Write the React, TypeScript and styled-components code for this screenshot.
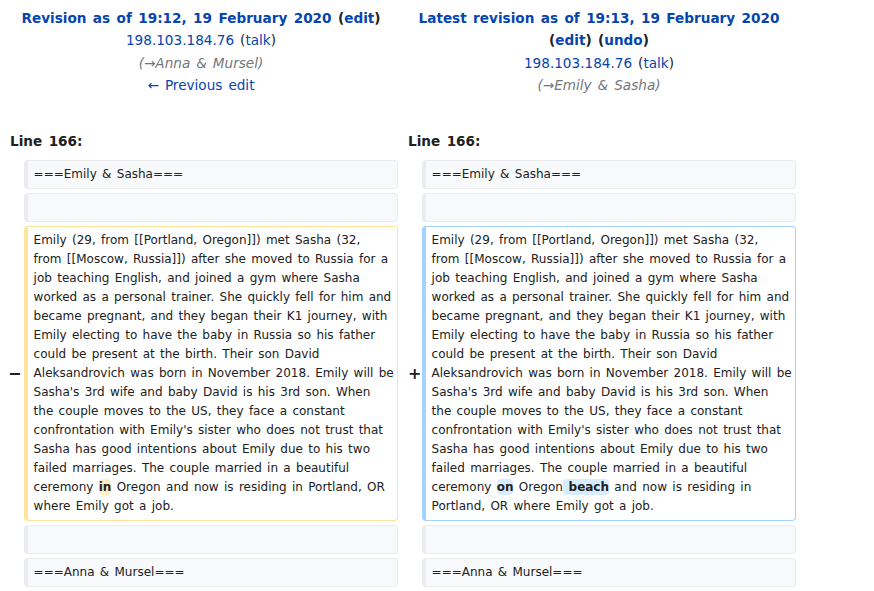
import React from "react";
import styled, { createGlobalStyle } from "styled-components";

type Kind = "context" | "deleted" | "added";

const GlobalStyle = createGlobalStyle`
  body {
    margin: 0;
    background: #fff;
    color: #202122;
    font-family: "DejaVu Sans", sans-serif;
    font-size: 13.6px;
    word-spacing: 1.7px;
  }
`;

const DiffTable = styled.table`
  width: 800px;
  table-layout: fixed;
  border-collapse: separate;
  border-spacing: 4px;
`;

const MarkerCol = styled.col`
  width: 2%;
`;

const ContentCol = styled.col`
  width: 48%;
`;

const HeaderCell = styled.td`
  text-align: center;
  vertical-align: top;
  line-height: 22.4px;
  padding: 3px 0 25px;
`;

const Title = styled.div`
  font-weight: bold;
`;

const Link = styled.a`
  color: #0645ad;
  text-decoration: none;
`;

const Summary = styled.div`
  color: #72777d;
  font-style: italic;
`;

const LineNo = styled.td`
  font-weight: bold;
  line-height: 22px;
  padding: 4px 6px 4px;
`;

const Marker = styled.td<{ $shift?: number }>`
  font-size: 16px;
  font-weight: bold;
  text-align: left;
  vertical-align: middle;
  padding: 0 0 0 ${(p) => p.$shift ?? 4}px;
  color: #202122;
  overflow: visible;
  white-space: nowrap;
`;

const borderColors: Record<Kind, string> = {
  context: "#eaecf0",
  deleted: "#ffe49c",
  added: "#a3d3ff",
};

const Cell = styled.td<{ $kind: Kind }>`
  font-size: 12px;
  line-height: 19px;
  word-spacing: 1.5px;
  vertical-align: top;
  white-space: pre-wrap;
  word-wrap: break-word;
  padding: 4px 2px 4px 6px;
  border-style: solid;
  border-width: 1px 1px 1px 4px;
  border-radius: 0.33em;
  border-color: ${(p) => borderColors[p.$kind]};
  background: ${(p) => (p.$kind === "context" ? "#f8f9fa" : "#fff")};
  color: #202122;
`;

const Change = styled.span<{ $kind: "deleted" | "added" }>`
  font-weight: bold;
  padding: 1px 0;
  border-radius: 0.33em;
  background: ${(p) => (p.$kind === "deleted" ? "#feeec8" : "#d8ecff")};
`;

const sharedLines = [
  "Emily (29, from [[Portland, Oregon]]) met Sasha (32,",
  "from [[Moscow, Russia]]) after she moved to Russia for a",
  "job teaching English, and joined a gym where Sasha",
  "worked as a personal trainer. She quickly fell for him and",
  "became pregnant, and they began their K1 journey, with",
  "Emily electing to have the baby in Russia so his father",
  "could be present at the birth. Their son David",
  "Aleksandrovich was born in November 2018. Emily will be",
  "Sasha's 3rd wife and baby David is his 3rd son. When",
  "the couple moves to the US, they face a constant",
  "confrontation with Emily's sister who does not trust that",
  "Sasha has good intentions about Emily due to his two",
  "failed marriages. The couple married in a beautiful",
];

const bodyStart = sharedLines.join("\n") + "\nceremony ";

function ContextRow({ text }: { text: string }) {
  return (
    <tr>
      <Marker />
      <Cell $kind="context">{text}</Cell>
      <Marker />
      <Cell $kind="context">{text}</Cell>
    </tr>
  );
}

export default function App() {
  return (
    <>
      <GlobalStyle />
      <DiffTable>
        <colgroup>
          <MarkerCol />
          <ContentCol />
          <MarkerCol />
          <ContentCol />
        </colgroup>
        <tbody>
          <tr>
            <HeaderCell colSpan={2}>
              <Title>
                <Link href="#">Revision as of 19:12, 19 February 2020</Link> (
                <Link href="#">edit</Link>)
              </Title>
              <div>
                <Link href="#">198.103.184.76</Link> (<Link href="#">talk</Link>)
              </div>
              <Summary>(→Anna &amp; Mursel)</Summary>
              <div>
                <Link href="#">← Previous edit</Link>
              </div>
            </HeaderCell>
            <HeaderCell colSpan={2}>
              <Title>
                <Link href="#">Latest revision as of 19:13, 19 February 2020</Link> (
                <Link href="#">edit</Link>) (<Link href="#">undo</Link>)
              </Title>
              <div>
                <Link href="#">198.103.184.76</Link> (<Link href="#">talk</Link>)
              </div>
              <Summary>(→Emily &amp; Sasha)</Summary>
            </HeaderCell>
          </tr>
          <tr>
            <LineNo colSpan={2}>Line 166:</LineNo>
            <LineNo colSpan={2}>Line 166:</LineNo>
          </tr>
          <ContextRow text="===Emily & Sasha===" />
          <ContextRow text={"\u00a0"} />
          <tr>
            <Marker $shift={4}>−</Marker>
            <Cell $kind="deleted">
              {bodyStart}
              <Change $kind="deleted">in</Change>
              {" Oregon and now is residing in Portland, OR\nwhere Emily got a job."}
            </Cell>
            <Marker $shift={6}>+</Marker>
            <Cell $kind="added">
              {bodyStart}
              <Change $kind="added">on</Change>
              {" Oregon"}
              <Change $kind="added"> beach</Change>
              {" and now is residing in\nPortland, OR where Emily got a job."}
            </Cell>
          </tr>
          <ContextRow text={"\u00a0"} />
          <ContextRow text="===Anna & Mursel===" />
        </tbody>
      </DiffTable>
    </>
  );
}
